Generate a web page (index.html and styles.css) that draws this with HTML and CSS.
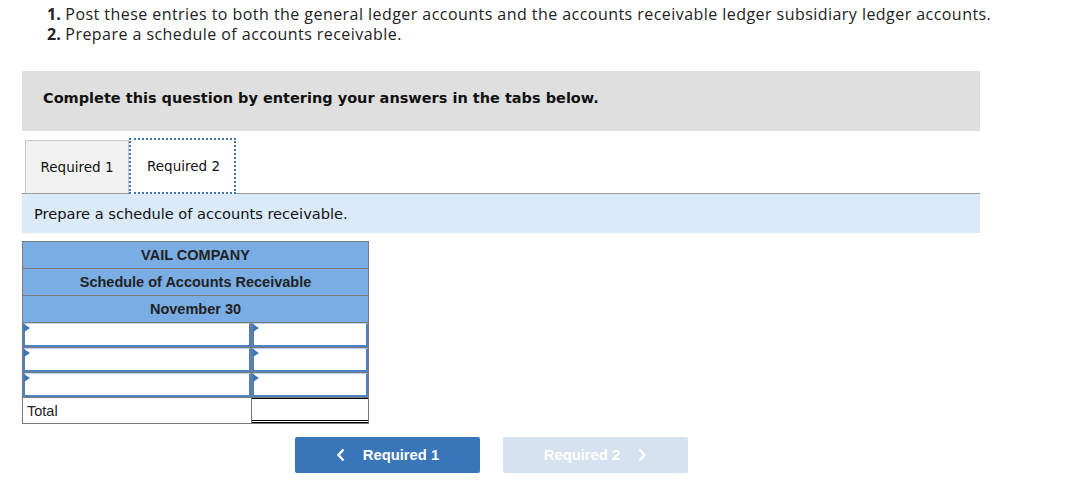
FILE: index.html
```html
<!DOCTYPE html>
<html>
<head>
<meta charset="utf-8">
<link rel="stylesheet" href="styles.css">
</head>
<body>
<div class="page">
  <ol class="instructions">
    <li><b>1.</b> Post these entries to both the general ledger accounts and the accounts receivable ledger subsidiary ledger accounts.</li>
    <li><b>2.</b> Prepare a schedule of accounts receivable.</li>
  </ol>
  <div class="banner">Complete this question by entering your answers in the tabs below.</div>
  <div class="tabs">
    <div class="tab">Required 1</div>
    <div class="tab active">Required 2</div>
  </div>
  <div class="prompt">Prepare a schedule of accounts receivable.</div>
  <table class="sched">
    <tr class="hd"><td colspan="2">VAIL COMPANY</td></tr>
    <tr class="hd"><td colspan="2">Schedule of Accounts Receivable</td></tr>
    <tr class="hd"><td colspan="2">November 30</td></tr>
    <tr class="inrow"><td class="c1"><div class="inp"></div></td><td class="c2"><div class="inp"></div></td></tr>
    <tr class="inrow"><td class="c1"><div class="inp"></div></td><td class="c2"><div class="inp"></div></td></tr>
    <tr class="inrow"><td class="c1"><div class="inp"></div></td><td class="c2"><div class="inp"></div></td></tr>
    <tr class="total"><td class="c1">Total</td><td class="c2"><div class="tot"></div></td></tr>
  </table>
  <div class="nav">
    <button class="btn prev"><svg class="chev" width="10" height="14" viewBox="0 0 10 14"><polyline points="7.5,1.5 2.5,7 7.5,12.5" fill="none" stroke="#fff" stroke-width="2.4"/></svg>Required 1</button>
    <button class="btn next">Required 2<svg class="chev" width="10" height="14" viewBox="0 0 10 14"><polyline points="2.5,1.5 7.5,7 2.5,12.5" fill="none" stroke="#fff" stroke-width="2.4"/></svg></button>
  </div>
</div>
</body>
</html>
```
FILE: styles.css
```css
html, body { margin: 0; padding: 0; background: #fff; }
.page { width: 1091px; }
.instructions {
  list-style: none;
  margin: 0;
  padding: 4px 0 0 47px;
  font-family: "Open Sans", sans-serif;
  font-size: 16px;
  letter-spacing: 0.45px;
  line-height: 20px;
  color: #222;
}
.instructions b { font-weight: 700; letter-spacing: 0; }
.banner {
  margin: 27px 0 0 22px;
  width: 958px;
  height: 60px;
  box-sizing: border-box;
  background: #dfdfdf;
  padding: 0 0 7px 21px;
  display: flex;
  align-items: center;
  font-family: "DejaVu Sans", Verdana, sans-serif;
  font-weight: bold;
  font-size: 14.5px;
  color: #111;
}
.tabs {
  margin: 9px 0 0 22px;
  width: 958px;
  display: flex;
  align-items: flex-end;
  padding-left: 3px;
  box-sizing: border-box;
  border-bottom: 1px solid #9a9a9a;
  height: 54px;
}
.tab {
  width: 104px;
  height: 53px;
  box-sizing: border-box;
  background: #f2f2f2;
  border: 1px solid #c8c8c8;
  border-bottom: none;
  display: flex;
  align-items: center;
  justify-content: center;
  font-family: "DejaVu Sans", Verdana, sans-serif;
  font-size: 13.5px;
  color: #111;
}
.tab.active {
  background: #fff;
  width: 107px;
  height: 56px;
  margin-bottom: -1px;
  border: 2px dotted #3a76b8;
  padding-left: 2px;
}
.prompt {
  margin: 0 0 0 22px;
  width: 958px;
  height: 39px;
  box-sizing: border-box;
  background: #dbeaf9;
  padding-left: 12px;
  display: flex;
  align-items: center;
  font-family: "DejaVu Sans", Verdana, sans-serif;
  font-size: 14.6px;
  color: #111;
}
.sched {
  margin: 8px 0 0 22px;
  border-collapse: collapse;
  width: 347px;
  font-family: "Liberation Sans", Arial, sans-serif;
  font-size: 14.5px;
  color: #222;
}
.sched td { border: 1px solid #7a7a7a; padding: 0; }
.sched .hd td {
  background: #7aade4;
  height: 26px;
  text-align: center;
  font-weight: bold;
}
.sched .c1 { width: 227px; }
.sched .c2 { width: 117px; }
.sched .inrow td { height: 24px; }
.inp {
  position: relative;
  height: 24px;
  box-sizing: border-box;
  border: 2px solid #4f80c0;
  border-top: 1px solid #bcd3ee;
  background: #fff;
}
.inp::before {
  content: "";
  position: absolute;
  left: -1px;
  top: 0;
  border-left: 6px solid #3a76b8;
  border-top: 4px solid transparent;
  border-bottom: 4px solid transparent;
}
.sched .total td { height: 25px; }
.sched .total .c1 { padding-left: 4px; }
.tot {
  height: 25px;
  box-sizing: border-box;
  border-top: 1px solid #000;
  border-bottom: 3px double #000;
}
.nav {
  margin: 13px 0 0 295px;
  display: flex;
  gap: 23px;
}
.btn {
  width: 185px;
  height: 36px;
  border: none;
  border-radius: 2px;
  font-family: "Liberation Sans", Arial, sans-serif;
  font-weight: bold;
  font-size: 14.8px;
  color: #fff;
  display: flex;
  align-items: center;
  justify-content: center;
  padding: 0;
}
.btn.prev { background: #3976b9; }
.btn.next { background: #d6e2f0; }
.prev .chev { margin-right: 17px; }
.next .chev { margin-left: 17px; }
```
